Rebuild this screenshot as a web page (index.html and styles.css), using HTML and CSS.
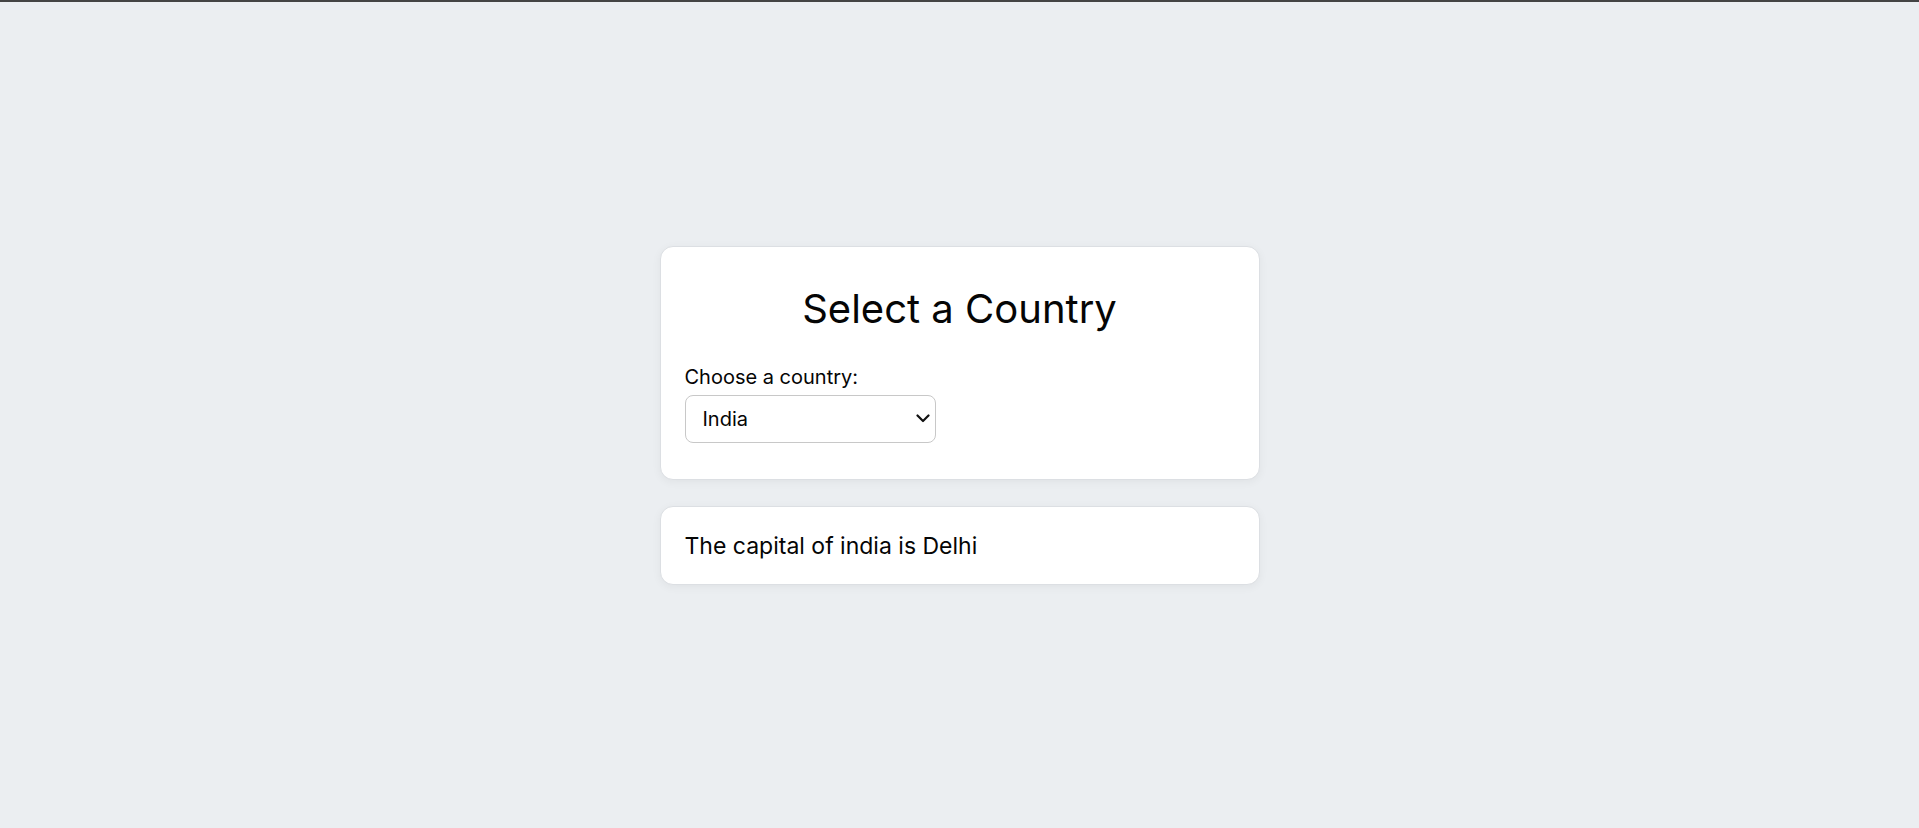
FILE: index.html
```html
<!DOCTYPE html>
<html lang="en">
<head>
<meta charset="utf-8">
<title>Select a Country</title>
<link rel="stylesheet" href="styles.css">
</head>
<body>
<div class="topbar"></div>
<main class="page">
  <section class="card selector">
    <h1 class="title">Select a Country</h1>
    <label class="label" for="country">Choose a country:</label>
    <div class="select-wrap">
      <select id="country" class="select">
        <option>India</option>
        <option>USA</option>
        <option>Japan</option>
      </select>
      <svg class="chevron" width="14" height="9" viewBox="0 0 14 9"><path d="M1.5 1.5 L7 7 L12.5 1.5" fill="none" stroke="#111" stroke-width="2.2" stroke-linecap="round" stroke-linejoin="round"/></svg>
    </div>
  </section>
  <section class="card result">
    <p class="result-text">The capital of india is Delhi</p>
  </section>
</main>
</body>
</html>
```
FILE: styles.css
```css
* { box-sizing: border-box; }
html, body { margin: 0; padding: 0; }
body {
  background: #ebeef1;
  font-family: Inter, "Open Sans", "Liberation Sans", sans-serif;
  color: #050505;
  min-height: 100vh;
  display: flex;
  flex-direction: column;
}
.topbar { height: 2px; background: #444; flex: none; }
.page {
  flex: 1;
  display: flex;
  flex-direction: column;
  align-items: center;
  justify-content: center;
  gap: 26px;
}
.card {
  width: 600px;
  background: #fff;
  border: 1px solid #dcdfe3;
  border-radius: 13px;
  box-shadow: 0 2px 10px rgba(0,0,0,0.05);
}
.selector { padding: 24px 24px 36px; }
.title {
  margin: 14px 0 32px;
  text-align: center;
  font-weight: 400;
  font-size: 40px;
  line-height: 48px;
  letter-spacing: 0;
}
.label {
  display: block;
  font-size: 20px;
  line-height: 24px;
  margin-bottom: 6px;
}
.select-wrap {
  position: relative;
  width: 251px;
  height: 48px;
}
.select {
  appearance: none;
  -webkit-appearance: none;
  width: 100%;
  height: 100%;
  border: 1px solid #c8c8c8;
  border-radius: 8px;
  background: #fff;
  padding: 0 17px;
  font-family: inherit;
  font-size: 20px;
  color: #050505;
}
.chevron {
  position: absolute;
  right: 6px;
  top: 19px;
  pointer-events: none;
}
.result { padding: 25px 24px 24px; }
.result-text {
  margin: 0;
  font-size: 23px;
  line-height: 28px;
}
```
